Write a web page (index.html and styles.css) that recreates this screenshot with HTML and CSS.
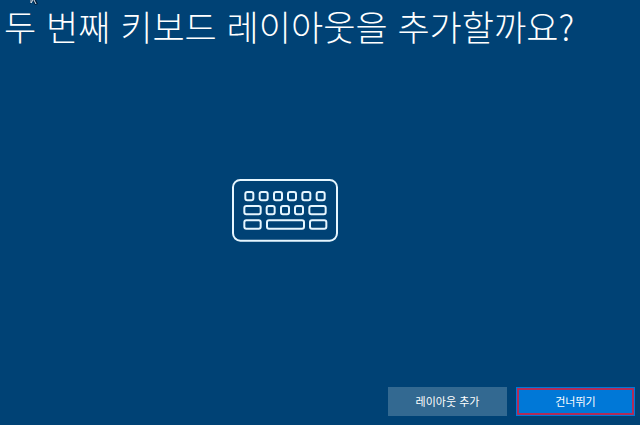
FILE: index.html
```html
<!DOCTYPE html>
<html lang="ko">
<head>
  <meta charset="UTF-8">
  <meta name="viewport" content="width=device-width, initial-scale=1.0">
  <title>키보드 레이아웃</title>
  <link rel="stylesheet" href="styles.css">
</head>
<body>

<svg class="cursor" width="10" height="5" viewBox="0 0 10 5" aria-hidden="true">
  <path d="M1 0H7L9 4L6 5L4 1L1 4Z" fill="#001c38"/>
  <path d="M2 0V3L4 0M5 0L7 4" fill="none" stroke="#dceaf5"/>
</svg>

<main class="setup">
  <h1 class="title">두 번째 키보드 레이아웃을 추가할까요?</h1>

  <div class="picture">
    <svg class="keyboard" viewBox="18 24 324 192" role="img" aria-label="키보드">
      <rect x="24" y="30" width="312" height="182" rx="22"/>
      <!-- top row -->
      <rect x="61" y="66" width="24" height="25" rx="6"/>
      <rect x="104" y="66" width="24" height="25" rx="6"/>
      <rect x="147" y="66" width="24" height="25" rx="6"/>
      <rect x="189" y="66" width="24" height="25" rx="6"/>
      <rect x="232" y="66" width="24" height="25" rx="6"/>
      <rect x="275" y="66" width="24" height="25" rx="6"/>
      <!-- middle row -->
      <rect x="58" y="108" width="49" height="25" rx="6"/>
      <rect x="125" y="108" width="24" height="25" rx="6"/>
      <rect x="168" y="108" width="24" height="25" rx="6"/>
      <rect x="210" y="108" width="24" height="25" rx="6"/>
      <rect x="253" y="108" width="49" height="25" rx="6"/>
      <!-- bottom row -->
      <rect x="58" y="151" width="49" height="25" rx="6"/>
      <rect x="126" y="151" width="111" height="25" rx="6"/>
      <rect x="255" y="151" width="49" height="25" rx="6"/>
    </svg>
  </div>

  <div class="actions">
    <button type="button" class="btn">레이아웃 추가</button>
    <button type="button" class="btn btn-primary"><span class="btn-ring">건너뛰기</span></button>
  </div>
</main>

</body>
</html>
```

FILE: styles.css
```css
* {
  box-sizing: border-box;
}

body {
  margin: 0;
  background-color: #004275;
  color: #fff;
  font-family: "Noto Sans CJK KR", sans-serif;
}

.cursor {
  position: absolute;
  top: 0;
  left: 29px;
}

.setup {
  display: flex;
  flex-direction: column;
  min-height: 100vh;
  padding: 2px 5px 9px 4px;
}

.title {
  margin: 0;
  font-size: 35px;
  font-weight: 300;
  line-height: 48px;
}

.picture {
  flex: 1;
  display: flex;
  justify-content: center;
  align-items: center;
  padding: 0 70px 18px 0;
}

.keyboard {
  width: 108px;
  height: 64px;
  fill: none;
  stroke: #e6f6ff;
  stroke-width: 6;
}

.actions {
  display: flex;
  justify-content: flex-end;
  gap: 9px;
}

.btn {
  width: 119px;
  height: 29px;
  padding: 0 0 2px;
  border: 0;
  background-color: #336991;
  color: #fff;
  font-family: inherit;
  font-size: 11px;
  line-height: 16px;
  cursor: pointer;
}

.btn-primary {
  display: flex;
  padding: 1px;
  background-color: #0078d7;
}

.btn-ring {
  flex: 1;
  height: 27px;
  border: 2px solid #b02c58;
  line-height: 23px;
}
```
